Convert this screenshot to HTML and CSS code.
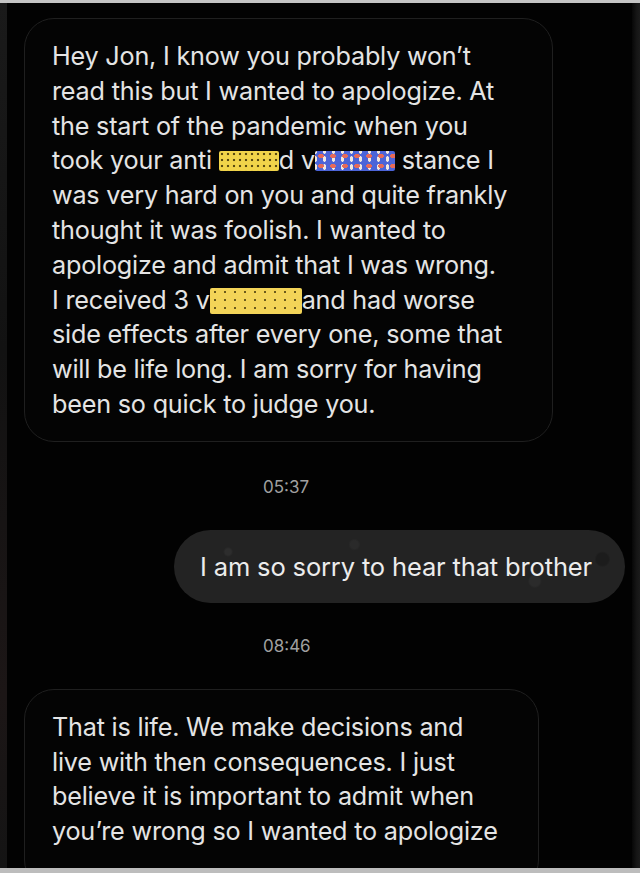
FILE: index.html
```html
<!DOCTYPE html>
<html>
<head>
<meta charset="utf-8">
<link rel="stylesheet" href="styles.css">
</head>
<body>
<div class="topbar"></div>
<div class="frame">
  <div class="edge edge-left"></div>
  <main class="chat">
    <div class="bubble bubble-in first">
      Hey Jon, I know you probably won’t<br>
      read this but I wanted to apologize. At<br>
      the start of the pandemic when you<br>
      took your anti <span class="tape tape-yellow w60"></span>d v<span class="tape tape-blue w80"></span> stance I<br>
      was very hard on you and quite frankly<br>
      thought it was foolish. I wanted to<br>
      apologize and admit that I was wrong.<br>
      I received 3 v<span class="tape tape-yellow2 w92"></span>and had worse<br>
      side effects after every one, some that<br>
      will be life long. I am sorry for having<br>
      been so quick to judge you.
    </div>
    <div class="time t1">05:37</div>
    <div class="row-out">
      <div class="bubble-out">I am so sorry to hear that brother</div>
    </div>
    <div class="time t2">08:46</div>
    <div class="bubble bubble-in last">
      That is life. We make decisions and<br>
      live with then consequences. I just<br>
      believe it is important to admit when<br>
      you’re wrong so I wanted to apologize
    </div>
  </main>
  <div class="edge edge-right"></div>
</div>
<div class="bottombar"></div>
</body>
</html>
```
FILE: styles.css
```css
html, body {
  margin: 0;
  padding: 0;
  background: #000;
  height: 873px;
  overflow: hidden;
}
body {
  font-family: Inter, "Liberation Sans", sans-serif;
  color: #e4e4e4;
  display: flex;
  flex-direction: column;
}
.topbar {
  height: 3px;
  background: #c4c4c4;
  flex: none;
}
.bottombar {
  height: 5px;
  background: #bdbdbd;
  flex: none;
}
.frame {
  flex: 1;
  display: flex;
  overflow: hidden;
  background: #020202;
}
.edge {
  flex: none;
  width: 7px;
}
.edge-left {
  background: linear-gradient(180deg, #1a1a1a, #121212 40%, #1c1616 80%, #141414);
}
.edge-right {
  width: 8px;
  margin-left: auto;
  background: linear-gradient(90deg, #070707, #161616 60%, #1b1b1b);
}
.chat {
  flex: 1;
  display: flex;
  flex-direction: column;
  padding-left: 17px;
  overflow: hidden;
}
.bubble-in {
  border: 1.5px solid #1f1f1f;
  border-radius: 30px;
  background: #040404;
  font-size: 25.2px;
  line-height: 34.8px;
  letter-spacing: -0.2px;
  padding: 20px 20px 19px 27px;
  white-space: nowrap;
  flex: none;
}
.first {
  margin-top: 15px;
  width: 480px;
}
.last {
  margin-top: 33px;
  width: 466px;
  padding-top: 20px;
  padding-bottom: 40px;
}
.tape {
  display: inline-block;
  height: 20px;
  vertical-align: -2px;
  border-radius: 2px;
}
.w60 { width: 60px; }
.w80 { width: 80px; }
.w92 { width: 92px; height: 26px; vertical-align: -5px; }
.tape-yellow {
  background-color: #f1d44a;
  background-image: radial-gradient(circle, #5a4b10 1.2px, transparent 1.6px);
  background-size: 6px 6px;
}
.tape-yellow2 {
  display: inline-block;
  border-radius: 2px;
  background-color: #f3d458;
  background-image: radial-gradient(circle, #6b5a1c 1px, transparent 1.5px);
  background-size: 10px 8px;
}
.tape-blue {
  background-color: #4c64d8;
  background-image:
    radial-gradient(ellipse 3px 2px, #e66a5a 90%, transparent 100%),
    radial-gradient(ellipse 2px 3px, #f0e8e0 90%, transparent 100%);
  background-size: 12px 10px, 9px 8px;
  background-position: 0 0, 5px 4px;
}
.time {
  text-align: left;
  padding-left: 239px;
  font-size: 17px;
  line-height: 20px;
  color: #a0a0a0;
  flex: none;
}
.t1 { margin-top: 35px; }
.t2 { margin-top: 33px; }
.row-out {
  display: flex;
  justify-content: flex-end;
  margin-top: 33px;
  padding-right: 7px;
  flex: none;
}
.bubble-out {
  width: 451px;
  box-sizing: border-box;
  height: 73px;
  border-radius: 37px;
  background-color: #232323;
  background-image:
    radial-gradient(circle at 12% 30%, #2d2d2d 3px, transparent 5px),
    radial-gradient(circle at 40% 20%, #2a2a2a 4px, transparent 6px),
    radial-gradient(circle at 80% 70%, #2b2b2b 5px, transparent 7px),
    radial-gradient(circle at 95% 40%, #1c1c1c 6px, transparent 8px);
  font-size: 25.5px;
  letter-spacing: -0.15px;
  display: flex;
  align-items: center;
  padding-left: 26px;
  white-space: nowrap;
  color: #ececec;
}
```
